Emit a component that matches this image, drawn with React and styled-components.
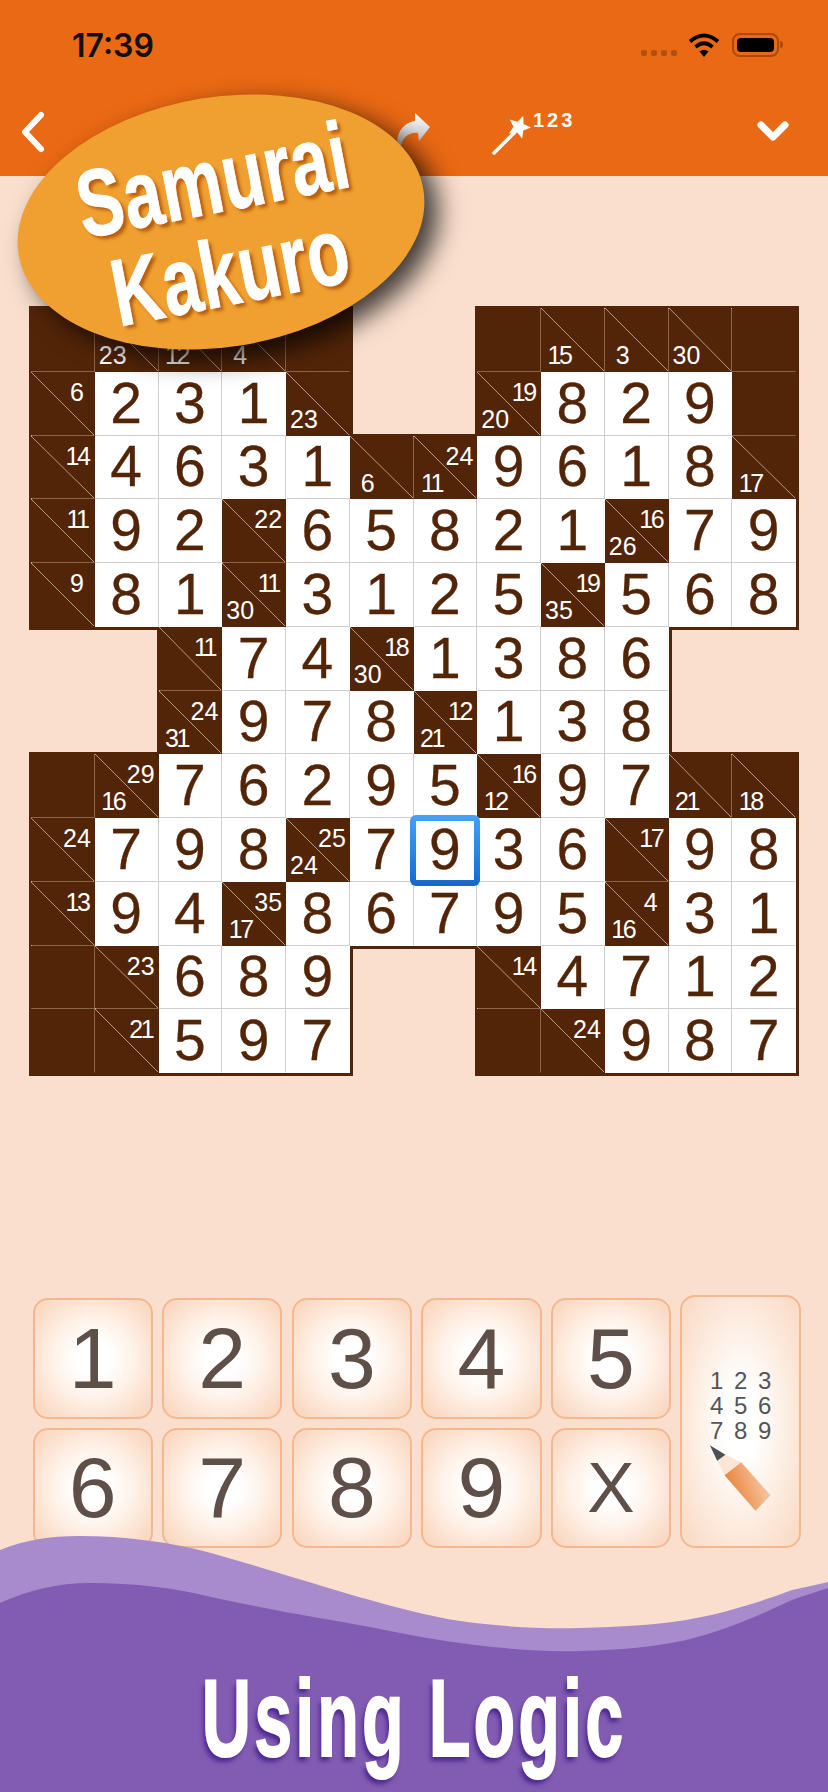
import styled, { createGlobalStyle } from 'styled-components'

const GlobalStyle = createGlobalStyle`
  html, body {
    margin: 0;
    padding: 0;
    background: #fadfce;
  }
`

const BROWN = '#532508'

const BOARD = [
  '# /23 /12 /4 # . . # /15 /3 /30 #',
  '6/ 2 3 1 /23 . . 19/20 8 2 9 #',
  '14/ 4 6 3 1 /6 24/11 9 6 1 8 /17',
  '11/ 9 2 22/ 6 5 8 2 1 16/26 7 9',
  '9/ 8 1 11/30 3 1 2 5 19/35 5 6 8',
  '. . 11/ 7 4 18/30 1 3 8 6 . .',
  '. . 24/31 9 7 8 12/21 1 3 8 . .',
  '# 29/16 7 6 2 9 5 16/12 9 7 /21 /18',
  '24/ 7 9 8 25/24 7 9* 3 6 17/ 9 8',
  '13/ 9 4 35/17 8 6 7 9 5 4/16 3 1',
  '# 23/ 6 8 9 . . 14/ 4 7 1 2',
  '# 21/ 5 9 7 . . # 24/ 9 8 7'
].map((row) => row.split(' '))

const KEYS = ['1', '2', '3', '4', '5', '6', '7', '8', '9', 'X']

const Page = styled.div`
  position: relative;
  width: 828px;
  height: 1792px;
  overflow: hidden;
  background: #fadfce;
  font-family: 'Liberation Sans', Arial, sans-serif;
`

const Header = styled.header`
  display: flex;
  flex-direction: column;
  height: 176px;
  background: #ea6914;
`

const StatusBar = styled.div`
  display: flex;
  align-items: center;
  height: 90px;
  padding: 0 49px 0 72px;
  box-sizing: border-box;
`

const Time = styled.span`
  font-family: Inter, sans-serif;
  font-size: 32px;
  font-weight: 600;
  color: #111;
  margin-right: auto;
`

const SignalDots = styled.div`
  display: flex;
  gap: 3.5px;
  margin: 16px 11px 0 0;
`

const Dot = styled.i`
  width: 6.5px;
  height: 6.5px;
  border-radius: 2px;
  background: #b3500f;
`

const Battery = styled.div`
  position: relative;
  width: 47px;
  height: 24px;
  margin-left: 12px;
  padding: 3px;
  box-sizing: border-box;
  border: 2px solid #a84a0c;
  border-radius: 8px;

  &::before {
    content: '';
    display: block;
    height: 100%;
    background: #000;
    border-radius: 4px;
  }

  &::after {
    content: '';
    position: absolute;
    right: -6px;
    top: 6px;
    width: 3px;
    height: 7px;
    border-radius: 0 3px 3px 0;
    background: #a84a0c;
  }
`

const Toolbar = styled.nav`
  display: flex;
  align-items: flex-start;
  padding: 20px 0 0 20px;
`

const ToolIcon = styled.svg`
  display: block;
  flex: none;
  margin-left: ${({ $left }) => $left || 0}px;
  margin-top: ${({ $top }) => $top || 0}px;
`

const WandLabel = styled.span`
  font-size: 20px;
  font-weight: bold;
  letter-spacing: 3px;
  line-height: 1;
  color: #fff;
  margin: 0 0 0 1px;
`

const Badge = styled.div`
  position: absolute;
  left: 16px;
  top: 97px;
  width: 410px;
  height: 250px;
  border-radius: 50%;
  background: #f0a030;
  box-shadow: 12px 12px 26px rgba(0, 0, 0, 0.75);
  transform: rotate(-9deg);
  display: flex;
  align-items: center;
  justify-content: center;
  z-index: 5;
`

const BadgeText = styled.div`
  display: flex;
  flex-direction: column;
  align-items: center;
  padding-top: 8px;
  transform: rotate(-2deg) scaleX(0.72);
  font-size: 95px;
  line-height: 93px;
  font-weight: bold;
  letter-spacing: 1px;
  color: #fff;
  -webkit-text-stroke: 1px #fff;
  text-shadow: 4px 4px 4px rgba(176, 84, 10, 0.9);
  white-space: nowrap;
`

const Main = styled.main`
  padding: 132px 0 0 31px;
`

const Board = styled.div`
  display: grid;
  grid-template-columns: repeat(12, 63.75px);
  grid-auto-rows: 63.75px;
`

const Cell = styled.div`
  position: relative;
  z-index: ${({ $raised }) => ($raised ? 2 : 'auto')};
  display: flex;
  align-items: center;
  justify-content: center;
  box-sizing: border-box;
  border-right: 1px solid ${({ $lineRight }) => $lineRight};
  border-bottom: 1px solid ${({ $lineBottom }) => $lineBottom};
  background: ${({ $dark }) => ($dark ? BROWN : '#fff')};
  box-shadow: ${({ $outline }) => $outline};
`

const ClueCell = styled(Cell)`
  background:
    linear-gradient(
      to top right,
      transparent calc(50% - 0.7px),
      #b49a84 50%,
      transparent calc(50% + 0.7px)
    ),
    ${BROWN};
`

const Clue = styled.span`
  position: absolute;
  width: 36px;
  text-align: center;
  font-size: 25px;
  line-height: 26px;
  color: #fff;
  letter-spacing: ${({ $tight }) => ($tight ? '-2.5px' : '0')};
  left: ${({ $low }) => ($low ? 0 : 28)}px;
  top: ${({ $low }) => ($low ? 34 : 7)}px;
`

const Digit = styled.span`
  position: relative;
  z-index: 1;
  font-size: 57px;
  line-height: 1;
  color: ${BROWN};
  -webkit-text-stroke: 0.3px ${BROWN};
`

const SelectedRing = styled.div`
  position: absolute;
  left: -3.5px;
  top: -3px;
  width: 70px;
  height: 71px;
  box-sizing: border-box;
  border: 6px solid transparent;
  border-radius: 6px;
  background:
    linear-gradient(#fff, #fff) padding-box,
    linear-gradient(#45a2f4, #1668cc) border-box;
`

const Keypad = styled.section`
  display: grid;
  grid-template-columns: repeat(6, 120.4px);
  grid-auto-rows: 120.5px;
  gap: 9px 9.2px;
  padding: 225px 0 0 1.5px;
`

const KeyButton = styled.div`
  display: flex;
  align-items: center;
  justify-content: center;
  box-sizing: border-box;
  border: 2px solid #f3b890;
  border-radius: 15px;
  background: radial-gradient(ellipse at center, #fff 20%, #fff1e7 50%, #fad9c3 88%);
  font-size: ${({ $small }) => ($small ? 71 : 86)}px;
  color: #5e4f48;
`

const PencilKey = styled(KeyButton)`
  grid-column: 6;
  grid-row: 1 / span 2;
  flex-direction: column;
  margin-top: -3px;
  padding: 38px 0 0;
  background: radial-gradient(ellipse at center, #fff 20%, #fdeee3 55%, #fadcc7 92%);
`

const NoteGrid = styled.div`
  display: grid;
  grid-template-columns: repeat(3, 24px);
  grid-auto-rows: 25px;
  justify-items: center;
  font-size: 24px;
  line-height: 25px;
  color: #555;
`

const WaveArt = styled.svg`
  position: absolute;
  left: 0;
  top: 1530px;
  display: block;
  z-index: 3;
`

const Slogan = styled.div`
  position: absolute;
  left: 0;
  right: 0;
  top: 1655px;
  z-index: 4;
  text-align: center;
  font-size: 110px;
  line-height: 126px;
  font-weight: bold;
  letter-spacing: 5px;
  color: #fff;
  -webkit-text-stroke: 2px #fff;
  transform: scaleX(0.62);
  text-shadow: -4px 5px 6px #4c2a90;
  white-space: nowrap;
`

const starPoints = (cx, cy, outer, inner, count) => {
  const points = []
  for (let i = 0; i < count * 2; i++) {
    const radius = i % 2 ? inner : outer
    const angle = (Math.PI * i) / count - Math.PI / 2.6
    points.push(`${cx + radius * Math.cos(angle)},${cy + radius * Math.sin(angle)}`)
  }
  return points.join(' ')
}

const valueAt = (r, c) => (BOARD[r] && BOARD[r][c]) || '.'
const isOpen = (r, c) => valueAt(r, c) === '.'
const isDark = (r, c) => {
  const value = valueAt(r, c)
  return value === '#' || value.includes('/')
}

const outlineFor = (r, c) => {
  const size = 3
  const shadows = []
  const right = isOpen(r, c + 1)
  const left = isOpen(r, c - 1)
  const up = isOpen(r - 1, c)
  const down = isOpen(r + 1, c)
  if (right) shadows.push(`${size}px 0 0 ${BROWN}`)
  if (left) shadows.push(`-2px 0 0 ${BROWN}`)
  if (up) shadows.push(`0 -2px 0 ${BROWN}`)
  if (down) shadows.push(`0 ${size}px 0 ${BROWN}`)
  if (right && down) shadows.push(`${size}px ${size}px 0 ${BROWN}`)
  if (left && down) shadows.push(`-2px ${size}px 0 ${BROWN}`)
  if (right && up) shadows.push(`${size}px -2px 0 ${BROWN}`)
  if (left && up) shadows.push(`-2px -2px 0 ${BROWN}`)
  return shadows.length ? shadows.join(', ') : 'none'
}

// grid line between a cell and its neighbour, only between two cells of the same kind
const lineColor = (r, c, nr, nc) => {
  const dark = isDark(r, c)
  if (isOpen(nr, nc)) return dark ? BROWN : '#fff'
  if (dark !== isDark(nr, nc)) return dark ? BROWN : '#fff'
  return dark ? 'rgba(255, 235, 215, 0.32)' : '#cfcfcf'
}

const BoardCell = ({ value, r, c }) => {
  if (value === '.') return <div />
  const cellProps = {
    $outline: outlineFor(r, c),
    $lineRight: lineColor(r, c, r, c + 1),
    $lineBottom: lineColor(r, c, r + 1, c)
  }
  if (value === '#') return <Cell $dark {...cellProps} />
  if (value.includes('/')) {
    const [across, down] = value.split('/')
    return (
      <ClueCell $dark {...cellProps}>
        {across && <Clue $tight={across.includes('1')}>{across}</Clue>}
        {down && (
          <Clue $low $tight={down.includes('1')}>
            {down}
          </Clue>
        )}
      </ClueCell>
    )
  }
  const selected = value.endsWith('*')
  return (
    <Cell $raised={selected} {...cellProps}>
      {selected && <SelectedRing />}
      <Digit>{value.replace('*', '')}</Digit>
    </Cell>
  )
}

const App = () => {
  return (
    <Page>
      <GlobalStyle />
      <Header>
        <StatusBar>
          <Time>17:39</Time>
          <SignalDots>
            <Dot />
            <Dot />
            <Dot />
            <Dot />
          </SignalDots>
          <svg width='32' height='24' viewBox='0 0 32 24'>
            <path d='M2 8.5 Q16 -3.5 30 8.5' fill='none' stroke='#000' strokeWidth='4' />
            <path d='M7.5 14 Q16 6.5 24.5 14' fill='none' stroke='#000' strokeWidth='4' />
            <path d='M11.5 18.5 L16 24 L20.5 18.5 Q16 15 11.5 18.5 Z' fill='#000' />
          </svg>
          <Battery />
        </StatusBar>
        <Toolbar>
          <ToolIcon width='26' height='44' viewBox='0 0 26 44'>
            <path
              d='M21 5 L5 22 L21 39'
              fill='none'
              stroke='#fff'
              strokeWidth='6'
              strokeLinecap='round'
              strokeLinejoin='round'
            />
          </ToolIcon>
          <ToolIcon $left={351} $top={3} width='33' height='34' viewBox='0 0 33 34'>
            <defs>
              <linearGradient id='redoFill' x1='0' y1='0' x2='0' y2='1'>
                <stop offset='0' stopColor='#fff' />
                <stop offset='1' stopColor='#b9b9b9' />
              </linearGradient>
            </defs>
            <path
              d='M0 30 C0 18 8 9 18 8 L18 0 L33 14 L22 28 L21 20 C12 19 6 24 4 33 Z'
              fill='url(#redoFill)'
            />
          </ToolIcon>
          <ToolIcon $left={60} width='42' height='46' viewBox='0 0 42 46'>
            <path d='M4 43 L29 18' stroke='#fff' strokeWidth='3.5' strokeLinecap='round' />
            <polygon points={starPoints(29, 17, 12, 5.5, 5)} fill='#fff' />
          </ToolIcon>
          <WandLabel>123</WandLabel>
          <ToolIcon $left={181} $top={9} width='34' height='24' viewBox='0 0 34 24'>
            <path
              d='M5 6 L17 18 L29 6'
              fill='none'
              stroke='#fff'
              strokeWidth='7'
              strokeLinecap='round'
              strokeLinejoin='round'
            />
          </ToolIcon>
        </Toolbar>
      </Header>

      <Badge>
        <BadgeText>
          <span>Samurai</span>
          <span>Kakuro</span>
        </BadgeText>
      </Badge>

      <Main>
        <Board>
          {BOARD.map((row, r) =>
            row.map((value, c) => <BoardCell key={`${r}-${c}`} value={value} r={r} c={c} />)
          )}
        </Board>
        <Keypad>
          {KEYS.map((key) => (
            <KeyButton key={key} $small={key === 'X'}>
              {key}
            </KeyButton>
          ))}
          <PencilKey>
            <NoteGrid>
              {KEYS.slice(0, 9).map((key) => (
                <span key={key}>{key}</span>
              ))}
            </NoteGrid>
            <svg width='67' height='70' viewBox='160 475 200 210'>
              <defs>
                <linearGradient id='pencilBody' x1='0' y1='1' x2='1' y2='0.6'>
                  <stop offset='0' stopColor='#e56f1c' />
                  <stop offset='1' stopColor='#f6c8a4' />
                </linearGradient>
              </defs>
              <polygon points='190,528 215,510 262,533 212,572' fill='#fbe6d6' />
              <polygon points='168,482 215,510 190,528' fill='#4d5054' />
              <polygon points='212,572 262,533 350,632 305,678' fill='url(#pencilBody)' />
            </svg>
          </PencilKey>
        </Keypad>
      </Main>

      <WaveArt width='828' height='262' viewBox='0 0 828 262'>
        <path
          d='M0 20 C25 10 50 6 79 6 C125 6 170 12 211 23 C265 38 320 56 370 70 C405 80 440 89 475 93 C510 97 545 99 581 98 C620 97 655 95 686 90 C725 83 760 72 792 60 C805 57 817 55 828 52 L828 262 L0 262 Z'
          fill='#a88bcc'
        />
        <path
          d='M0 73 C28 60 58 53 90 53 C135 53 175 58 211 67 C265 79 320 88 370 97 C405 104 440 111 475 115 C510 119 545 122 581 121 C620 120 655 117 686 110 C725 101 760 85 792 70 C805 65 817 62 828 58 L828 262 L0 262 Z'
          fill='#825bb2'
        />
      </WaveArt>
      <Slogan>Using Logic</Slogan>
    </Page>
  )
}

export default App
